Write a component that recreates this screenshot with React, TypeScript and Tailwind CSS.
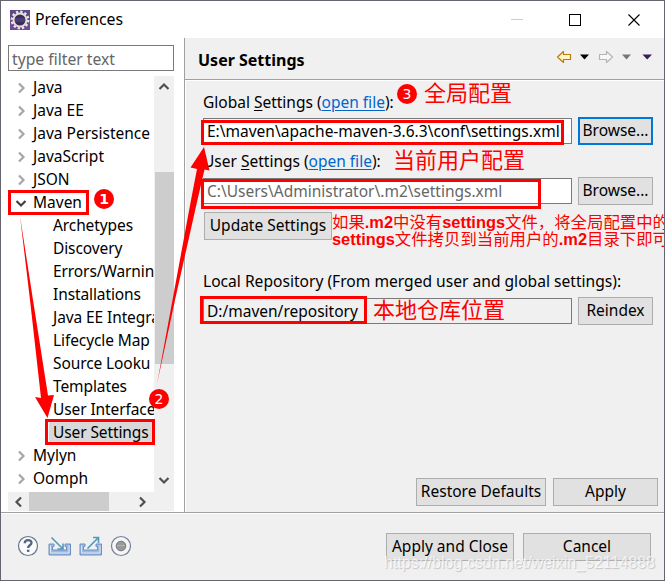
import { ReactNode } from 'react';
import clsx from 'clsx';

type TreeItem = { label: string; level: number; open?: boolean; selected?: boolean };

const tree: TreeItem[] = [
  { label: 'Java', level: 0 },
  { label: 'Java EE', level: 0 },
  { label: 'Java Persistence', level: 0 },
  { label: 'JavaScript', level: 0 },
  { label: 'JSON', level: 0 },
  { label: 'Maven', level: 0, open: true },
  { label: 'Archetypes', level: 1 },
  { label: 'Discovery', level: 1 },
  { label: 'Errors/Warnin', level: 1 },
  { label: 'Installations', level: 1 },
  { label: 'Java EE Integra', level: 1 },
  { label: 'Lifecycle Map', level: 1 },
  { label: 'Source Looku', level: 1 },
  { label: 'Templates', level: 1 },
  { label: 'User Interface', level: 1 },
  { label: 'User Settings', level: 1, selected: true },
  { label: 'Mylyn', level: 0 },
  { label: 'Oomph', level: 0 },
];

const chevrons = {
  right: 'M4 1.500 8.500 6 4 10.500',
  left: 'M8 1.500 3.500 6 8 10.500',
  down: 'M1.500 4 6 8.500 10.500 4',
  up: 'M1.500 8 6 3.500 10.500 8',
};

function Chevron({ dir, className }: { dir: keyof typeof chevrons; className?: string }) {
  return (
    <svg width="12" height="12" viewBox="0 0 12 12" className={className}>
      <path d={chevrons[dir]} fill="none" stroke="currentColor" strokeWidth="2.2" />
    </svg>
  );
}

function Button({ children, className, focused }: { children: ReactNode; className?: string; focused?: boolean }) {
  return (
    <button
      className={clsx(
        'flex h-7 shrink-0 items-center justify-center whitespace-nowrap bg-[#e1e1e1]',
        focused ? 'border-2 border-[#0078d7]' : 'border border-[#adadad]',
        className,
      )}
    >
      {children}
    </button>
  );
}

function Field({ value, className }: { value: string; className?: string }) {
  return (
    <div className={clsx('flex h-[26px] w-[369px] items-center border border-[#7a7a7a] pl-[3px] leading-6 whitespace-nowrap', className)}>
      {value}
    </div>
  );
}

function SettingsLabel({ name }: { name: string }) {
  return (
    <div className="h-5 leading-5 whitespace-nowrap">
      {name} <span className="underline decoration-1 underline-offset-2">S</span>ettings (
      <a className="text-[#0066cc] underline decoration-1 underline-offset-2">open file</a>):
    </div>
  );
}

function Logo() {
  return (
    <svg width="20" height="20" viewBox="0 0 20 20">
      <rect width="20" height="20" fill="#5b4a86" />
      <rect y="10" width="20" height="10" fill="#6d4a96" />
      <circle cx="10" cy="10" r="8.300" fill="none" stroke="#eeeae6" strokeWidth="2.200" strokeDasharray="2.3 2.045" />
      <circle cx="10" cy="10" r="6.500" fill="#3b2c5d" stroke="#e4e0dc" strokeWidth="2" />
      <path d="M5 9h10M5 11h10" stroke="#5d5088" strokeWidth="1" />
    </svg>
  );
}

function NavArrows() {
  return (
    <svg width="100" height="16" viewBox="0 0 100 16">
      <path d="M1.500 8 7.500 2.500v3h7v5h-7v3z" fill="#fff4bd" stroke="#b77a16" strokeWidth="1.200" strokeLinejoin="round" />
      <path d="M24 5.500h9l-4.500 5z" fill="#000" />
      <path d="M56.500 8 50.500 2.500v3h-7v5h7v3z" fill="#f8f8f8" stroke="#b5b5b5" strokeWidth="1.200" strokeLinejoin="round" />
      <path d="M66 5.500h9l-4.500 5z" fill="#777" />
      <path d="M86.500 5.500h9.500l-4.800 5z" fill="#35205c" />
    </svg>
  );
}

function FooterIcons() {
  return (
    <svg width="116" height="22" viewBox="0 0 116 22">
      <circle cx="11" cy="11" r="9.500" fill="#f9fbfd" stroke="#66738f" strokeWidth="1.200" />
      <path d="M7.700 8.300c0-4.300 6.800-4.200 6.800-.500 0 2.500-3.400 2.500-3.400 5.200" fill="none" stroke="#536582" strokeWidth="2.300" />
      <path d="M9.900 14.700h2.500v2.200H9.900z" fill="#536582" />
      {/* import and export trays */}
      <g fill="none">
        <path d="M32 9h5v2.500h-1.500V15h14v-3.500H48V9h5.500v11H32z" fill="#9db9e2" stroke="#6f8fc0" />
        <path d="M33.500 10.500v7.500h18.500v-7.500" stroke="#dce7f6" />
        <path d="m34.500 2.500 11 11M46 8.500v5.500h-5.500" stroke="#5199bb" strokeWidth="1.600" />
        <path d="M63 9h5v2.500h-1.500V15h14v-3.500H79V9h5.500v11H63z" fill="#9db9e2" stroke="#6f8fc0" />
        <path d="M64.500 10.500v7.500H83v-7.500" stroke="#dce7f6" />
        <path d="M70.500 13.500 81 3M76 2.500h5.500V8" stroke="#5199bb" strokeWidth="1.600" />
      </g>
      <circle cx="104" cy="11" r="9.500" fill="#f6f6f6" stroke="#73809a" strokeWidth="1.200" />
      <circle cx="104" cy="11" r="4.800" fill="#999" stroke="#777" />
      <path d="M100 10.500h8" stroke="#b5b5b5" />
    </svg>
  );
}

function Tree() {
  return (
    <div className="mt-[5px] w-[166px]">
      <div className="flex h-[416px]">
        <ul className="w-[146px] overflow-hidden">
          {tree.map((item) => (
            <li
              key={item.label}
              className={clsx('flex h-[23px] items-center whitespace-nowrap', item.level === 1 ? 'pl-[41px]' : 'pl-[5px]')}
            >
              {item.level === 0 && (
                <span className="mr-1 flex w-4 justify-center">
                  <Chevron dir={item.open ? 'down' : 'right'} className={item.open ? 'text-[#404040]' : 'text-[#a6a6a6]'} />
                </span>
              )}
              <span
                className={clsx(
                  'leading-[21px]',
                  item.level === 1 && 'pl-1 tracking-[-0.1px]',
                  item.selected && 'bg-[#d9d9d9] pr-1',
                )}
              >
                {item.label}
              </span>
            </li>
          ))}
        </ul>
        <div className="flex w-5 flex-col items-center bg-[#f0f0f0] text-[#505050]">
          <div className="flex h-24 items-start pt-[5px]">
            <Chevron dir="up" />
          </div>
          <div className="h-48 w-[19px] bg-[#cdcdcd]" />
          <div className="flex flex-1 items-end pb-[6px]">
            <Chevron dir="down" />
          </div>
        </div>
      </div>
      <div className="flex h-[19px] items-center bg-[#f0f0f0] text-[#505050]">
        <div className="flex w-[21px] justify-center">
          <Chevron dir="left" />
        </div>
        <div className="h-full w-20 bg-[#cdcdcd]" />
        <div className="flex w-[39px] justify-end">
          <Chevron dir="right" />
        </div>
      </div>
    </div>
  );
}

function Badge({ n, className }: { n: number; className: string }) {
  return (
    <span
      className={clsx(
        "absolute flex size-5 items-center justify-center rounded-full bg-[#fe0000] font-['DejaVu_Sans'] text-[14px] leading-none text-white",
        className,
      )}
    >
      {n}
    </span>
  );
}

// Red marks drawn over the dialog
function Annotations() {
  return (
    <div className="pointer-events-none absolute inset-0 font-['Liberation_Sans','Noto_Sans_CJK_SC',sans-serif] whitespace-nowrap text-[#fe0000]">
      <svg className="absolute inset-0" width="665" height="581" viewBox="0 0 665 581">
        <g fill="none" stroke="#fe0000" strokeWidth="3">
          <rect x="9.500" y="191.500" width="78" height="22" />
          <rect x="46.500" y="420.500" width="107" height="23" />
          <rect x="202.500" y="121.500" width="360" height="22" />
          <rect x="202.500" y="180.500" width="337" height="27" />
          <rect x="201.500" y="297.500" width="164" height="25" />
        </g>
        <path d="M20 216 33 300 48 395.500 54 395 47.500 418 35 397 41 398 30 300z" fill="#fe0000" />
        <path d="M157 384 172.500 300 191 200 197 169 190.500 167.500 204 147 209.500 170.500 204.500 169.500 197 202 175 300z" fill="#fe0000" />
      </svg>
      <Badge n={1} className="top-[189px] left-[94px] font-bold" />
      <Badge n={2} className="top-[389px] left-[149px]" />
      <Badge n={3} className="top-[84px] left-[397px]" />
      <span className="absolute top-[80px] left-[424px] text-[22px] leading-7">全局配置</span>
      <span className="absolute top-[147px] left-[393px] text-[22px] leading-7">当前用户配置</span>
      <span className="absolute top-[297px] left-[373px] text-[22px] leading-7">本地仓库位置</span>
      <p className="absolute top-[214px] left-[332px] text-[16.400px] leading-[17px]">
        如果<b>.m2</b>中没有<b>settings</b>文件，将全局配置中的
        <br />
        <b>settings</b>文件拷贝到当前用户的<b>.m2</b>目录下即可
      </p>
    </div>
  );
}

export default function App() {
  return (
    <div className="relative flex h-[581px] w-[665px] flex-col overflow-hidden border border-[#66646c] bg-[#f0f0f0] font-['Noto_Sans',sans-serif] text-[15.500px] text-black">
      <header className="flex h-[37px] shrink-0 items-center bg-white pl-[9px]">
        <Logo />
        <span className="ml-[5px] pt-px text-[15.800px]">Preferences</span>
        <div className="ml-auto flex items-center pr-6">
          <span className="mr-[46px] h-px w-3 bg-[#ccc]" />
          <span className="mr-[47px] size-3 border border-black" />
          <svg width="12" height="12" viewBox="0 0 12 12">
            <path d="m.5.5 11 11m0-11-11 11" stroke="#000" strokeWidth="1.100" />
          </svg>
        </div>
      </header>

      <div className="flex h-[474px] shrink-0">
        <aside className="w-[183px] shrink-0 bg-white pt-[7px] pl-[7px]">
          <div className="flex h-[26px] w-[166px] items-center border border-[#7a7a7a] pt-0.5 pl-[3px] text-[15.700px] leading-6 text-[#666]">
            type filter text
          </div>
          <Tree />
        </aside>
        <main className="flex flex-1 flex-col border-l border-[#a0a0a0]">
          <div className="flex h-[42px] items-center justify-between border-b border-[#a0a0a0] pr-2 pl-[13px]">
            <h1 className="pt-0.5 text-[16px] font-bold">User Settings</h1>
            <div className="pb-1">
              <NavArrows />
            </div>
          </div>
          <div className="flex flex-1 flex-col border-t border-l border-white pl-[17px]">
            <div className="mt-[11px]">
              <SettingsLabel name="Global" />
            </div>
            <div className="mt-[5px] flex items-center gap-[6px]">
              <Field value="E:\maven\apache-maven-3.6.3\conf\settings.xml" className="bg-white" />
              <Button className="w-[75px]" focused>Browse...</Button>
            </div>
            <div className="mt-[6px]">
              <SettingsLabel name="User" />
            </div>
            <div className="mt-[6px] flex items-center gap-[6px]">
              <Field value="C:\Users\Administrator\.m2\settings.xml" className="bg-white text-[#666]" />
              <Button className="w-[75px]">Browse...</Button>
            </div>
            <Button className="mt-[7px] ml-px w-32">Update Settings</Button>
            <div className="mt-[31px] h-5 text-[15.600px] leading-[21px] whitespace-nowrap">
              Local Repository (From merged user and global settings):
            </div>
            <div className="mt-[6px] flex items-center gap-[6px]">
              <Field value="D:/maven/repository" />
              <Button className="w-[75px]">Reindex</Button>
            </div>
            <div className="mt-auto mb-[6px] flex justify-end gap-[7px] pr-[6px]">
              <Button className="w-[130px]">Restore Defaults</Button>
              <Button className="w-[105px]">Apply</Button>
            </div>
          </div>
        </main>
      </div>

      <footer className="flex flex-1 items-start justify-between border-t border-[#a0a0a0] pr-[13px] pl-4 shadow-[inset_0_1px_0_white]">
        <div className="mt-[22px]">
          <FooterIcons />
        </div>
        <div className="mt-5 flex gap-[9px]">
          <Button className="w-32">Apply and Close</Button>
          <Button className="w-32">Cancel</Button>
        </div>
      </footer>

      <div className="absolute -inset-px">
        <Annotations />
      </div>
      <span className="absolute right-[9px] bottom-[7px] font-['Liberation_Sans'] text-[16px] leading-5 text-white/70 [text-shadow:1px_1px_1px_#c4c4c4]">
        https://blog.csdn.net/weixin_52114888
      </span>
    </div>
  );
}
